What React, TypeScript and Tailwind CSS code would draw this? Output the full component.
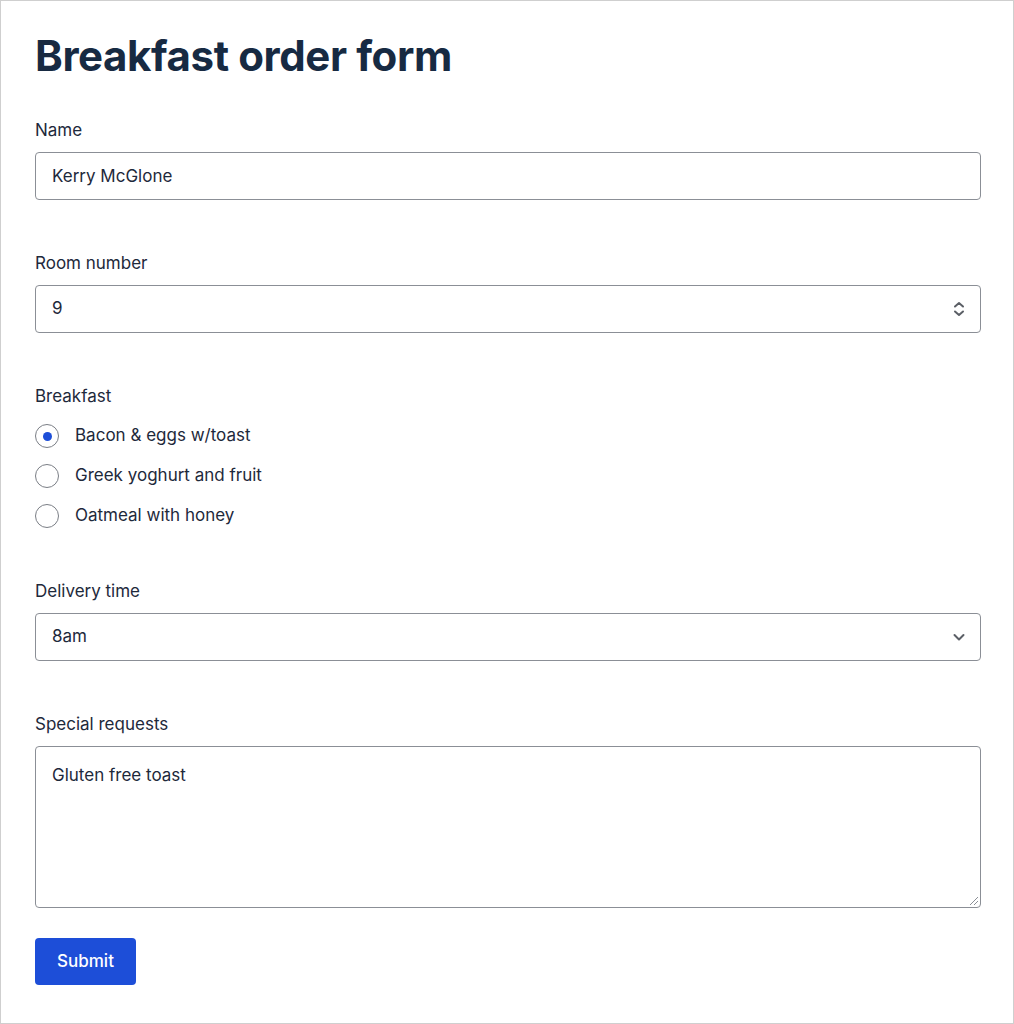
import React from "react";

const inputCls =
  "w-full h-[48px] rounded-[4px] border border-[#8b8f96] bg-white px-4 text-[17px] text-[#1e293b] outline-none";

function Label({ children }: { children: React.ReactNode }) {
  return <div className="text-[17px] leading-6 text-[#1e293b] mb-[10px]">{children}</div>;
}

function Radio({ checked, label }: { checked?: boolean; label: string }) {
  return (
    <div className="flex items-center h-10">
      <div className="w-[24px] h-[24px] rounded-full border-[1.5px] border-[#7a7e85] flex items-center justify-center">
        {checked && <div className="w-[9px] h-[9px] rounded-full bg-[#1d4ed8]" />}
      </div>
      <span className="ml-4 text-[17px] text-[#1e293b]">{label}</span>
    </div>
  );
}

export default function App() {
  return (
    <div
      className="w-[1014px] h-[1024px] border border-[#cfcfcf] bg-white pl-[34px] pr-[32px] pt-[27px]"
      style={{ fontFamily: "Inter, 'Noto Sans', sans-serif" }}
    >
      <h1 className="text-[42px] leading-[56px] font-bold text-[#172a42] tracking-[-0.4px]">Breakfast order form</h1>

      <div className="mt-[34px]">
        <Label>Name</Label>
        <div className={inputCls + " flex items-center pt-[1px]"}>Kerry McGlone</div>
      </div>

      <div className="mt-[51px]">
        <Label>Room number</Label>
        <div className={inputCls + " flex items-center justify-between pr-[14px]"}>
          <span>9</span>
          <svg width="14" height="18" viewBox="0 0 14 18" fill="none" stroke="#5b5f66" strokeWidth="2" strokeLinecap="round" strokeLinejoin="round">
            <path d="M3 6.5 L7 3 L11 6.5" />
            <path d="M3 11.5 L7 15 L11 11.5" />
          </svg>
        </div>
      </div>

      <div className="mt-[51px]">
        <Label>Breakfast</Label>
        <div className="-mt-[2px]">
          <Radio checked label="Bacon & eggs w/toast" />
          <Radio label="Greek yoghurt and fruit" />
          <Radio label="Oatmeal with honey" />
        </div>
      </div>

      <div className="mt-[43px]">
        <Label>Delivery time</Label>
        <div className={inputCls + " flex items-center justify-between pr-[14px]"}>
          <span>8am</span>
          <svg width="14" height="10" viewBox="0 0 14 10" fill="none" stroke="#5b5f66" strokeWidth="2" strokeLinecap="round" strokeLinejoin="round">
            <path d="M2.5 3 L7 7.5 L11.5 3" />
          </svg>
        </div>
      </div>

      <div className="mt-[51px]">
        <Label>Special requests</Label>
        <div className="relative w-full h-[162px] rounded-[4px] border border-[#8b8f96] px-4 pt-[16px] text-[17px] text-[#1e293b]">
          Gluten free toast
          <svg className="absolute right-[1px] bottom-[1px]" width="10" height="10" viewBox="0 0 10 10" stroke="#8b8f96" strokeWidth="1">
            <path d="M9 1 L1 9" />
            <path d="M9 5 L5 9" />
          </svg>
        </div>
      </div>

      <button className="mt-[30px] h-[47px] w-[101px] rounded-[4px] bg-[#1d4ed8] text-white text-[17px] font-medium">
        Submit
      </button>
    </div>
  );
}
